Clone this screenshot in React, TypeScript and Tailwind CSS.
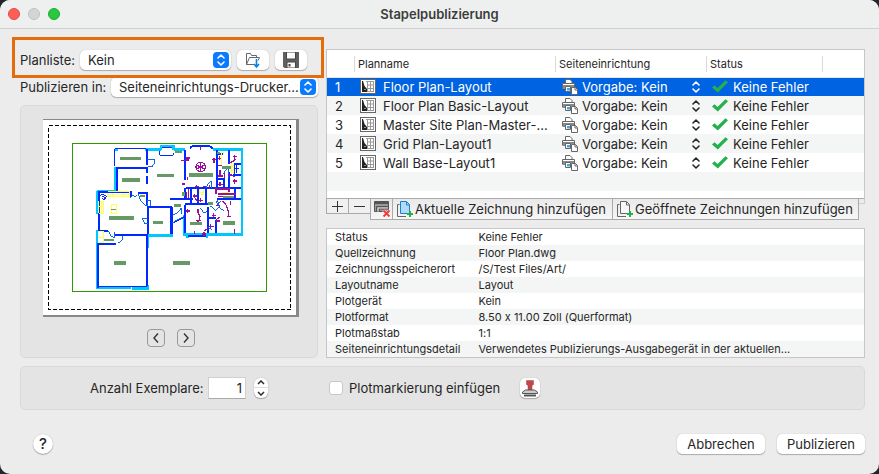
import { useState } from "react";

interface Plan {
  name: string;
}

const plans: Plan[] = [
  { name: "Floor Plan-Layout" },
  { name: "Floor Plan Basic-Layout" },
  { name: "Master Site Plan-Master-..." },
  { name: "Grid Plan-Layout1" },
  { name: "Wall Base-Layout1" },
];

const details = [
  ["Status", "Keine Fehler"],
  ["Quellzeichnung", "Floor Plan.dwg"],
  ["Zeichnungsspeicherort", "/S/Test Files/Art/"],
  ["Layoutname", "Layout"],
  ["Plotgerät", "Kein"],
  ["Plotformat", "8.50 x 11.00 Zoll (Querformat)"],
  ["Plotmaßstab", "1:1"],
  ["Seiteneinrichtungsdetail", "Verwendetes Publizierungs-Ausgabegerät in der aktuellen..."],
];

const softButton =
  "flex items-center justify-center bg-white shadow-[0_0_1px_rgba(0,0,0,0.3),0_1px_1px_rgba(0,0,0,0.25)]";

const UpDown = ({ className }: { className?: string }) => (
  <svg className={className} width="8" height="12" viewBox="0 0 8 12" fill="none" stroke="currentColor" strokeWidth="1.6" strokeLinecap="round" strokeLinejoin="round">
    <path d="M1 4 4 1l3 3M1 8l3 3 3-3" />
  </svg>
);

const LayoutIcon = () => (
  <svg width="16" height="15" viewBox="0 0 16 15" className="shrink-0">
    <rect x="0.5" y="0.5" width="15" height="14" fill="#fff" stroke="#666" />
    <path d="M6 2.500h8M7 6h7M7 9.500h7M7.500 2v11M10.500 2v11M13.500 2v11M7 12.500h7" stroke="#999" fill="none" />
    <path d="M2 2h1l1.500 5L7 10v3H2Z" fill="#222" />
    <path d="M4.500 10.500h1" stroke="#fff" />
  </svg>
);

const PrinterIcon = () => (
  <svg width="16" height="16" viewBox="0 0 16 16" className="shrink-0">
    <path d="M3.500 5V.500h4.500l2 2V5" fill="#fff" stroke="#666" />
    <path d="M.500 9.500v-5h12V8" fill="#fff" stroke="#666" />
    <path d="M1 6h11v2H9v2H1Z" fill="#8a8a8a" />
    <path d="M3.500 7.500h5v5h-5Z" fill="#fff" stroke="#666" />
    <path d="M5 9h3v2.500H5Z" fill="#45a7e6" />
    <path d="M9.500 8.500h4l2 2v5h-6Z" fill="#fff" stroke="#666" />
    <path d="M13 8.500V11h2.500" fill="none" stroke="#666" />
  </svg>
);

const CheckIcon = () => (
  <svg width="16" height="13" viewBox="0 0 16 13" className="shrink-0">
    <path d="m0 7.500 2.500-2.300L5.500 8 13.500.3 16 2.200 5.800 12.600Z" fill="#22b14c" />
  </svg>
);

const FolderIcon = () => (
  <svg width="16" height="17" viewBox="0 0 16 17" fill="none" stroke="#666">
    <path d="M9 12.500H1.500v-11h4l1 2h5v2M1.500 12.500l3-7h10l-1.500 3" />
    <path d="M11.500 7v7M9 12l2.500 3 2.500-3" stroke="#0a84e0" strokeWidth="1.600" />
  </svg>
);

const DiskIcon = () => (
  <svg width="16" height="16" viewBox="0 0 16 16">
    <path d="M0 0h16v16H1.500L0 14.500Z" fill="#606060" />
    <path d="M3.500 0h9v7h-9Z" fill="#fff" stroke="#444" />
    <path d="M4 10h8.500v6H4Z" fill="#fff" stroke="#444" />
    <path d="M5.500 12h2v2.500h-2Z" fill="#444" />
  </svg>
);

const RemoveIcon = () => (
  <svg width="16" height="16" viewBox="0 0 16 16" fill="none">
    <path d="M.500.500h14v10h-14Z" fill="#9a9a9a" stroke="#555" />
    <path d="M1 2h13" stroke="#555" strokeWidth="2" />
    <path d="M2.500 11V5.500H14M5.500 11V8H14" stroke="#555" />
    <path d="M4 11V7h10" stroke="#ccc" />
    <path d="m9.500 9.500 6 6m0-6-6 6" stroke="#fff" strokeWidth="3" />
    <path d="m9.500 9.500 6 6m0-6-6 6" stroke="#f43b3b" strokeWidth="2" />
  </svg>
);

const AddSheetIcon = ({ fill, edge }: { fill: string; edge: string }) => (
  <svg width="16" height="16" viewBox="0 0 16 16" fill="none" className="shrink-0">
    <path d="M2.500 3.500h-2v12H9" stroke="#666" />
    <path d="M3.500.500h6l3 3v9h-9Z" fill={fill} stroke={edge} />
    <path d="M9.500 1v3H12" stroke={edge} />
    <path d="M13 10v6M10 13h6" stroke="#22b14c" strokeWidth="2" />
  </svg>
);

const StampIcon = () => (
  <svg width="16" height="17" viewBox="0 0 16 17">
    <path d="M4.500.500h7v4l-1.500 1V10H6V5.500l-1.500-1Z" fill="#c0474a" stroke="#a93c3f" strokeWidth=".500" />
    <path d="M.500 13.500v-1.500l3-2h9l3 2v1.500Z" fill="#ccc" stroke="#555" />
    <path d="M2 15.500h12" stroke="#555" strokeWidth="2" />
  </svg>
);

/* Sheet with printable area, plot frame and the floor plan itself */
const PlanPreview = () => (
  <svg width="256" height="198" viewBox="0 0 256 198" shapeRendering="crispEdges" fill="none" role="img" aria-label="Vorschau">
    <rect width="256" height="198" fill="#888" />
    <rect y="1" width="253" height="195" fill="#fff" />
    <rect x="5.500" y="6.500" width="242" height="184" stroke="#000" strokeDasharray="4 2" />
    <rect x="29.500" y="24.500" width="194" height="148" stroke="#2f9a00" />
    <g transform="translate(37 16) scale(.33333)">
      <path
        stroke="#00c8ff"
        strokeWidth="8"
        d="M103 45h11M106 95v76M50 170h60M51 168v70M51 285v176M48 459h105M156 461h50M204 458v-8M204 340v-40M200 301h78M312 240v58M308 298h180M322 300v8M381 300v8M486 298V42M488 43h-90M314 43h-33M281 46V34h-38v12M243 44h-47"
      />
      <path
        stroke="#0028ff"
        strokeWidth="6"
        d="M108 99h94v15M110 98v72M56 170v118h28M55 171h97v16M55 325v133M55 326h54M104 299h96v155M200 43v48M200 122v26M315 46v90M330 39l8-6h50l8 6v4M410 46v114M448 46v42M448 110v50M482 86h-20v34h20M318 159h92M314 160v30M332 160v46M355 160v46M377 160v46M270 192h68M200 216h72v81M203 216v80M175 173h25v40M276 216v80M316 209v86M384 216v79M315 207h72M323 304h56M410 160h72M465 160v32h17M410 193h72M408 254v40M386 250h22M410 58h18M410 132h22v28M384 218v32h24M448 58v16"
      />
      <path stroke="#0028ff" strokeWidth="3" d="M104 94V41h94M239 48v13h41V48M56 455h145M280 264l32-16M54 326v128M247 38h28" />
      <path
        stroke="#0868e8"
        strokeWidth="3"
        d="M200 73h23v13l-7 9h-12M151 187l8-7 4 6 7-5M175 178l7 18 12 14 9 3V196h10v16M201 251h-14l7 16h9M278 240l14-5 12-17v20M276 264l28-16 8-4M86 288l6 14 12 6v-18M128 304v10l-14 11M378 160l6-14 10-8v22M412 196l8 22 13 12M391 213l16 13 11-10-10-18M397 286l-12-9M360 218l12 16 10-4M430 117l6-11 9-7v31M424 197l-13 12"
      />
      <path stroke="#0028ff" strokeWidth="3" d="m59 185 8-8 13 7-8 10-7-5M66 183l11 7M471 91v22M465 100h13" />
      <path
        stroke="#ffff55"
        strokeWidth="3"
        d="M84 173v12h66v-14H84M98 173v10M130 173v10M84 179h66M57 198v37h14v-34H59M64 198v36M57 216h14M95 208h15v28H95ZM55 291h16v31H55M55 307h16M359 163v15h12v-15M282 46v7M425 47v42M430 50v9M455 84v34M460 84v34M455 94h7M455 108h7M425 173h24M357 174h14"
      />
      <circle cx="362" cy="96" r="14" stroke="#991199" strokeWidth="4" />
      <path
        stroke="#991199"
        strokeWidth="4"
        d="M362 82v28M349 89l26 14M375 89l-26 14M318 69h12M316 75h12M302 76h12M323 126v8M306 147h10M362 35v10M397 74h12M402 69v14M418 64v12M414 70h10M464 59v13M459 65h11M466 72l-8 8-12 3M464 132v14M459 138h11M464 126l-10-6-10 2M343 176v12M338 183h12M345 190l11 12M320 170v18M326 163v25M350 149v10M345 154h12M388 151v10M370 154h9M408 157v20M412 162h35v9M415 177h53M413 184h18M361 190v12M356 197h12M354 223v10l6 12-3 11-9 9M349 256h13M323 222v11M319 228h12M395 241h14M400 235v15M418 246l-9 8M409 211h10M427 197l12 14 6 18v17M440 245h12M452 197v14M464 283v14M372 291v12M366 297h13M392 267v13M387 274h15M383 283l-11 3M344 287v9M408 258h12M420 105v22M415 123h14M434 114v15M415 92h12M414 148h15M420 141v12"
      />
      <g fill="#669966">
        <path d="M120 66h63v9h-63zM231 117h51v9h-51zM127 129h54v11h-54zM327 114h73v12h-73zM285 48h22v6h-22zM179 179h16v7h-16zM87 243h75v12H87zM219 258h30v9h-30zM282 207h22v9h-22zM330 261h37v9h-37zM429 259h36v10h-36zM426 93h27v8h-27zM385 201h15v9h-15zM429 183h33v5h-33zM102 378h37v11h-37zM279 378h51v11h-51zM72 312h30v6H72zM93 221h14v4H93zM305 171h10v12h-10zM411 50h9v7h-9z" />
      </g>
    </g>
  </svg>
);

export default function App() {
  const [selected, setSelected] = useState(0);
  const [copies, setCopies] = useState("1");
  const [stamp, setStamp] = useState(false);

  const step = (by: number) => setCopies(String(Math.max(1, (Number(copies) || 0) + by)));

  return (
    <div className="flex min-h-screen bg-[#24242e] font-['Inter','Liberation_Sans',sans-serif] text-[13px] leading-4 text-[#262626] [font-feature-settings:'calt'_0]">
      <div className="flex w-full flex-col overflow-hidden rounded-[10px] bg-[#ececec]">
        <header className="grid h-[29px] grid-cols-[1fr_auto_1fr] items-center border-b border-[#d0d0d0] bg-[#eef0ef] px-2">
          <div className="flex gap-2">
            <button type="button" aria-label="Schließen" className="size-3 rounded-full border border-[#e24b41] bg-[#ff5f57]" />
            <button type="button" aria-label="Minimieren" className="size-3 rounded-full border border-[#c0c1c0] bg-[#d3d5d4]" />
            <button type="button" aria-label="Zoomen" className="size-3 rounded-full border border-[#1dad2b] bg-[#28c840]" />
          </div>
          <h1 className="font-semibold text-[#3c3c3c]">Stapelpublizierung</h1>
        </header>

        <main className="flex flex-col pt-2 pr-3.5 pl-3">
          <div className="flex gap-0.5">
            <section className="flex w-[312px] shrink-0 flex-col">
              <div className="relative z-10 flex h-[41px] items-start border-3 border-[#e46c0a] pt-[10px] pl-[5px]">
                <label htmlFor="planlist" className="w-[60px] pt-0.5">Planliste:</label>
                <div className={`${softButton} mr-1.5 h-5 w-[151px] rounded-[5px]`}>
                  <select id="planlist" className="w-full appearance-none bg-transparent pl-2 outline-none">
                    <option>Kein</option>
                  </select>
                  <span className="pointer-events-none mr-0.5 flex size-4 shrink-0 items-center justify-center rounded-[4px] bg-[#0a7aff] text-white">
                    <UpDown />
                  </span>
                </div>
                <button type="button" aria-label="Planliste laden" className={`${softButton} mr-1.5 h-5 w-8 rounded-[5px]`}>
                  <FolderIcon />
                </button>
                <button type="button" aria-label="Planliste speichern" className={`${softButton} h-5 w-8 rounded-[5px]`}>
                  <DiskIcon />
                </button>
              </div>

              <div className="-mt-px flex pl-2">
                <label htmlFor="publish-to" className="w-[91px] pt-0.5 whitespace-nowrap">Publizieren in:</label>
                <div className={`${softButton} h-5 w-[207px] rounded-[5px]`}>
                  <select id="publish-to" className="w-full min-w-0 appearance-none bg-transparent pl-2 outline-none">
                    <option>Seiteneinrichtungs-Drucker...</option>
                  </select>
                  <span className="pointer-events-none mr-0.5 flex size-4 shrink-0 items-center justify-center rounded-[4px] bg-[#0a7aff] text-white">
                    <UpDown />
                  </span>
                </div>
              </div>

              <div className="mt-2 mr-1.5 ml-2 flex flex-1 flex-col items-center rounded-[5px] border border-[#d9d9d9] bg-[#e4e4e4] pt-[13px] pl-1">
                <PlanPreview />
                <div className="mt-3 flex gap-3">
                  <button type="button" aria-label="Zurück" className="flex size-[18px] items-center justify-center rounded-[4px] border border-[#999]">
                    <svg width="6" height="10" viewBox="0 0 6 10" fill="none" stroke="#333" strokeWidth="1.400">
                      <path d="M5 .5 1 5l4 4.500" />
                    </svg>
                  </button>
                  <button type="button" aria-label="Weiter" className="flex size-[18px] items-center justify-center rounded-[4px] border border-[#999]">
                    <svg width="6" height="10" viewBox="0 0 6 10" fill="none" stroke="#333" strokeWidth="1.400">
                      <path d="m1 .5 4 4.500-4 4.500" />
                    </svg>
                  </button>
                </div>
              </div>
            </section>

            <section className="flex min-w-0 flex-1 flex-col pt-3">
              <div className="border border-[#c6c6c6] border-b-[#aaa] bg-white">
                <table className="w-full table-fixed">
                  <colgroup>
                    <col className="w-[27px]" />
                    <col className="w-[201px]" />
                    <col className="w-[151px]" />
                    <col className="w-[116px]" />
                    <col />
                  </colgroup>
                  <thead>
                    <tr className="h-[27px] border-b border-[#e6e6e6] text-left text-[11px] [&>th]:p-0 [&>th]:pt-0.5 [&>th]:font-normal">
                      <th aria-label="Nummer" />
                      <th><div className="border-l border-[#d9d9d9] pl-[3px]">Planname</div></th>
                      <th><div className="border-l border-[#d9d9d9] pl-[3px]">Seiteneinrichtung</div></th>
                      <th><div className="border-l border-[#d9d9d9] pl-[3px]">Status</div></th>
                      <th><div className="h-4 border-l border-[#d9d9d9]" /></th>
                    </tr>
                  </thead>
                  <tbody>
                    {plans.map((plan, i) => (
                      <tr
                        key={plan.name}
                        onClick={() => setSelected(i)}
                        className={`h-[19px] ${i === selected ? "bg-[#0063e1] text-white" : i % 2 ? "bg-[#f4f5f5]" : "bg-white"}`}
                      >
                        <td className="p-0 pl-2">{i + 1}</td>
                        <td className="p-0 pl-1.5">
                          <div className="flex items-center gap-[7px] whitespace-nowrap">
                            <LayoutIcon />
                            {plan.name}
                          </div>
                        </td>
                        <td className="p-0 pr-1.5 pl-[7px]">
                          <div className="flex items-center gap-1">
                            <PrinterIcon />
                            <select aria-label={`Seiteneinrichtung ${plan.name}`} className="h-4 min-w-0 flex-1 appearance-none bg-transparent outline-none">
                              <option>Vorgabe: Kein</option>
                            </select>
                            <UpDown className="pointer-events-none" />
                          </div>
                        </td>
                        <td className="p-0 pl-1.5" colSpan={2}>
                          <div className="flex items-center gap-[5px]">
                            <CheckIcon />
                            Keine Fehler
                          </div>
                        </td>
                      </tr>
                    ))}
                  </tbody>
                </table>
                <div className="mb-[7px] h-[19px] bg-[#f4f5f5]" />
              </div>

              <div className="-mt-px flex items-start">
                <button type="button" aria-label="Plan hinzufügen" className="flex h-4 w-[23px] items-center justify-center border border-[#aaa] bg-[#f0f0f0]">
                  <svg width="11" height="11" viewBox="0 0 11 11" stroke="#333"><path d="M5.500 0v11M0 5.500h11" /></svg>
                </button>
                <button type="button" aria-label="Plan entfernen" className="-ml-px flex h-4 w-[23px] items-center justify-center border border-[#aaa] bg-[#f0f0f0]">
                  <svg width="11" height="11" viewBox="0 0 11 11" stroke="#333"><path d="M0 5.500h11" /></svg>
                </button>
                <button type="button" aria-label="Liste leeren" className="-ml-px flex h-[22px] w-[23px] items-center justify-center border border-[#aaa] bg-linear-to-b from-[#e9e9e9] to-[#f7f7f7]">
                  <RemoveIcon />
                </button>
                <button type="button" className="-ml-px flex h-[22px] w-[221px] items-center gap-0.5 border border-[#aaa] bg-linear-to-b from-[#e9e9e9] to-[#f7f7f7] pl-1 whitespace-nowrap">
                  <AddSheetIcon fill="#b5daf5" edge="#1283d8" />
                  Aktuelle Zeichnung hinzufügen
                </button>
                <button type="button" className="-ml-px flex h-[22px] w-[247px] items-center gap-0.5 border border-[#aaa] bg-linear-to-b from-[#e9e9e9] to-[#f7f7f7] pl-1 whitespace-nowrap">
                  <AddSheetIcon fill="#f8f8f8" edge="#666" />
                  Geöffnete Zeichnungen hinzufügen
                </button>
                <span className="h-1.5 flex-1 border-t border-r border-b border-[#d0d0d0] border-t-[#aaa]" />
              </div>

              <table className="mt-2 w-full table-fixed border border-[#c6c6c6] text-[11px]">
                <colgroup>
                  <col className="w-[144px]" />
                  <col />
                </colgroup>
                <tbody>
                  {details.map(([label, value]) => (
                    <tr key={label} className="h-4 odd:bg-white even:bg-[#f4f5f5]">
                      <th scope="row" className="p-0 pl-2 text-left font-normal">{label}</th>
                      <td className="truncate p-0 pl-2">{value}</td>
                    </tr>
                  ))}
                </tbody>
              </table>
            </section>
          </div>

          <section className="mt-2 ml-2 flex h-11 items-center rounded-[5px] border border-[#d9d9d9] bg-[#e4e4e4]">
            <label htmlFor="copies" className="w-[187px] pl-[69px] whitespace-nowrap">Anzahl Exemplare:</label>
            <input
              id="copies"
              inputMode="numeric"
              value={copies}
              onChange={(e) => setCopies(e.target.value)}
              className="h-[22px] w-[38px] border border-[#d0d0d0] border-b-[#aaa] bg-white pr-[3px] text-right outline-none"
            />
            <div className={`${softButton} ml-2 h-5 w-[14px] flex-col rounded-[6px]`}>
              <button type="button" aria-label="Mehr" onClick={() => step(1)} className="flex h-2.5 w-full items-center justify-center border-b border-[#ddd]">
                <svg width="8" height="5" viewBox="0 0 8 5" fill="none" stroke="#333" strokeWidth="1.600"><path d="m1 4 3-3 3 3" /></svg>
              </button>
              <button type="button" aria-label="Weniger" onClick={() => step(-1)} className="flex h-2.5 w-full items-center justify-center">
                <svg width="8" height="5" viewBox="0 0 8 5" fill="none" stroke="#333" strokeWidth="1.600"><path d="m1 1 3 3 3-3" /></svg>
              </button>
            </div>
            <label className="ml-[61px] flex w-[191px] items-center gap-1.5">
              <input
                type="checkbox"
                checked={stamp}
                onChange={(e) => setStamp(e.target.checked)}
                className="size-3.5 appearance-none rounded-[3px] border border-[#c8c8c8] bg-white checked:bg-[#0a7aff]"
              />
              Plotmarkierung einfügen
            </label>
            <button type="button" aria-label="Plotstempel" className={`${softButton} size-5 rounded-[5px]`}>
              <StampIcon />
            </button>
          </section>
        </main>

        <footer className="mt-6 flex items-center gap-3 pr-3.5 pl-[33px]">
          <button type="button" aria-label="Hilfe" className={`${softButton} mr-auto size-5 rounded-full text-[15px] font-medium`}>?</button>
          <button type="button" className={`${softButton} h-5 w-[88px] rounded-[5px]`}>Abbrechen</button>
          <button type="button" className={`${softButton} h-5 w-[88px] rounded-[5px]`}>Publizieren</button>
        </footer>
      </div>
    </div>
  );
}
